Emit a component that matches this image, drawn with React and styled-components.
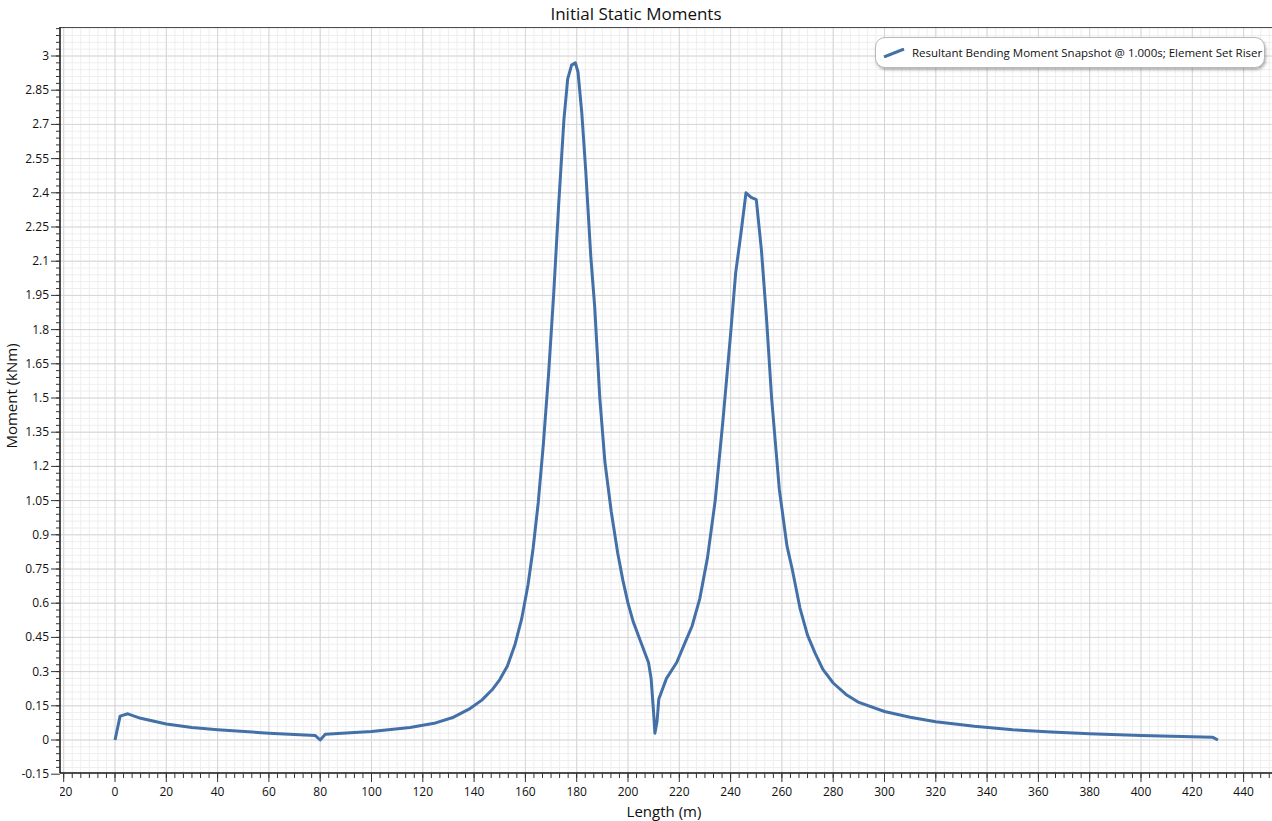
import styled, { createGlobalStyle } from "styled-components";

const Global = createGlobalStyle`
  body { margin: 0; background: #fff; font-family: "Open Sans", "Noto Sans", sans-serif; }
`;

// page-coordinate mapping
const X0 = 115, XS = 2.565; // px per metre
const Y0 = 740, YS = 228; // px per kNm
const L = 60, R = 1272, T = 27, B = 773;
const px = (m) => X0 + m * XS;
const py = (v) => Y0 - v * YS;

const data = [
  [0, 0], [2, 0.105], [5, 0.115], [10, 0.095], [20, 0.07], [30, 0.055], [40, 0.045], [60, 0.03],
  [78, 0.02], [80, 0], [82, 0.025], [100, 0.037], [115, 0.055], [125, 0.075], [132, 0.1], [138, 0.135],
  [143, 0.175], [147, 0.22], [150, 0.265], [153, 0.325], [156, 0.42], [158.5, 0.53], [161, 0.68],
  [163, 0.84], [165, 1.04], [167, 1.3], [169, 1.6], [171, 1.95], [173, 2.35], [175, 2.72], [176.5, 2.9],
  [178, 2.96], [179.5, 2.97], [180.5, 2.93], [182, 2.75], [183.5, 2.5], [185.5, 2.12], [187, 1.9],
  [189, 1.5], [191, 1.22], [193.5, 1.0], [196, 0.82], [198, 0.7], [200, 0.6], [202, 0.52], [205, 0.43],
  [208, 0.34], [209, 0.27], [210, 0.12], [210.5, 0.03], [211.3, 0.08], [212, 0.18], [215, 0.27],
  [219, 0.34], [222, 0.42], [225, 0.5], [228, 0.62], [231, 0.8], [234, 1.05], [237, 1.4], [240, 1.78],
  [242, 2.05], [244, 2.22], [246, 2.4], [248, 2.38], [250, 2.37], [252, 2.15], [254, 1.85], [256, 1.5],
  [259, 1.1], [262, 0.85], [264, 0.75], [267, 0.58], [270, 0.46], [273, 0.38], [276, 0.31], [280, 0.25],
  [285, 0.2], [290, 0.165], [300, 0.125], [310, 0.1], [320, 0.08], [335, 0.06], [350, 0.045], [365, 0.035],
  [380, 0.027], [400, 0.02], [428, 0.012], [430, 0],
];
const curve = data.map(([m, v], i) => `${i ? "L" : "M"}${px(m).toFixed(1)},${py(v).toFixed(1)}`).join(" ");

const range = (a, b, s) => { const r = []; for (let v = a; v <= b + 1e-9; v += s) r.push(+v.toFixed(4)); return r; };
const xMajor = range(-20, 460, 20).filter((m) => px(m) >= L && px(m) <= R);
const xMinor = range(-40, 460, 20 / 6).filter((m) => px(m) >= L && px(m) <= R);
const yMajor = range(-0.15, 3.15, 0.15).filter((v) => py(v) >= T && py(v) <= B + 2);
const yMinor = range(-0.18, 3.15, 0.03).filter((v) => py(v) >= T && py(v) <= B);

const Page = styled.div`
  width: 1272px;
  height: 821px;
  display: flex;
  flex-direction: column;
  overflow: hidden;
`;
const Title = styled.div`
  height: 27px;
  text-align: center;
  font-size: 17px;
  line-height: 27px;
  color: #111;
`;
const Middle = styled.div`
  display: flex;
  position: relative;
  height: 773px;
`;
const YTitle = styled.div`
  width: 22px;
  display: flex;
  align-items: center;
  justify-content: center;
  & span {
    transform: rotate(-90deg);
    white-space: nowrap;
    font-size: 15px;
    color: #111;
    margin-top: -36px;
  }
`;
const XTitle = styled.div`
  height: 21px;
  text-align: center;
  font-size: 15px;
  line-height: 22px;
  padding-left: 56px;
  color: #111;
`;
const Legend = styled.div`
  position: absolute;
  top: 10px;
  left: 875px;
  width: 390px;
  height: 31px;
  box-sizing: border-box;
  border: 1px solid #b8b8b8;
  border-radius: 10px;
  background: #fff;
  box-shadow: 1px 2px 3px rgba(0, 0, 0, 0.3);
  display: flex;
  align-items: center;
  gap: 7px;
  padding-left: 7px;
  font-size: 11.5px;
  color: #111;
  white-space: nowrap;
`;

function Chart() {
  return (
    <svg width="1250" height="773" viewBox="22 27 1250 773" style={{ display: "block" }} fontFamily="'Open Sans', sans-serif">
      <defs>
        <clipPath id="plot"><rect x={L} y={T} width={R - L} height={B - T} /></clipPath>
        <clipPath id="ylab"><rect x={22} y={T} width={L - 22} height={B - T + 5} /></clipPath>
        <clipPath id="xlab"><rect x={L} y={B} width={R - L} height={40} /></clipPath>
      </defs>
      <g clipPath="url(#plot)">
        {xMinor.map((m) => <line key={"xm" + m} x1={px(m)} x2={px(m)} y1={T} y2={B} stroke="#eeeeee" />)}
        {yMinor.map((v) => <line key={"ym" + v} x1={L} x2={R} y1={py(v)} y2={py(v)} stroke="#eeeeee" />)}
        {xMajor.map((m) => <line key={"xM" + m} x1={px(m)} x2={px(m)} y1={T} y2={B} stroke="#d6d6d6" />)}
        {yMajor.map((v) => <line key={"yM" + v} x1={L} x2={R} y1={py(v)} y2={py(v)} stroke="#d6d6d6" />)}
        <path d={curve} fill="none" stroke="#4470a8" strokeWidth="3" strokeLinejoin="round" />
      </g>
      <line x1={L} x2={L} y1={T} y2={B} stroke="#111" strokeWidth="1.5" />
      <line x1={L} x2={R} y1={T} y2={T} stroke="#111" strokeWidth="1.5" />
      <line x1={L} x2={R} y1={B} y2={B} stroke="#111" strokeWidth="1.5" />
      {yMinor.map((v) => <line key={"yt" + v} x1={L - 4} x2={L} y1={py(v)} y2={py(v)} stroke="#333" />)}
      {yMajor.map((v) => <line key={"yT" + v} x1={L - 9} x2={L} y1={py(v)} y2={py(v)} stroke="#333" />)}
      {xMinor.map((m) => <line key={"xt" + m} x1={px(m)} x2={px(m)} y1={B} y2={B + 5} stroke="#333" />)}
      {xMajor.map((m) => <line key={"xT" + m} x1={px(m)} x2={px(m)} y1={B} y2={B + 9} stroke="#333" />)}
      <g clipPath="url(#ylab)" fontSize="12" fill="#111" textAnchor="end">
        {yMajor.map((v) => <text key={"yl" + v} x={L - 11} y={py(v) + 4}>{String(v)}</text>)}
      </g>
      <g clipPath="url(#xlab)" fontSize="12" fill="#111" textAnchor="middle">
        {xMajor.map((m) => <text key={"xl" + m} x={px(m)} y={B + 23}>{String(m)}</text>)}
      </g>
    </svg>
  );
}

export default function App() {
  return (
    <Page>
      <Global />
      <Title>Initial Static Moments</Title>
      <Middle>
        <YTitle><span>Moment (kNm)</span></YTitle>
        <Chart />
        <Legend>
          <svg width="22" height="10"><line x1="1" y1="9" x2="21" y2="1" stroke="#4470a8" strokeWidth="3" /></svg>
          Resultant Bending Moment Snapshot @ 1.000s; Element Set Riser
        </Legend>
      </Middle>
      <XTitle>Length (m)</XTitle>
    </Page>
  );
}
